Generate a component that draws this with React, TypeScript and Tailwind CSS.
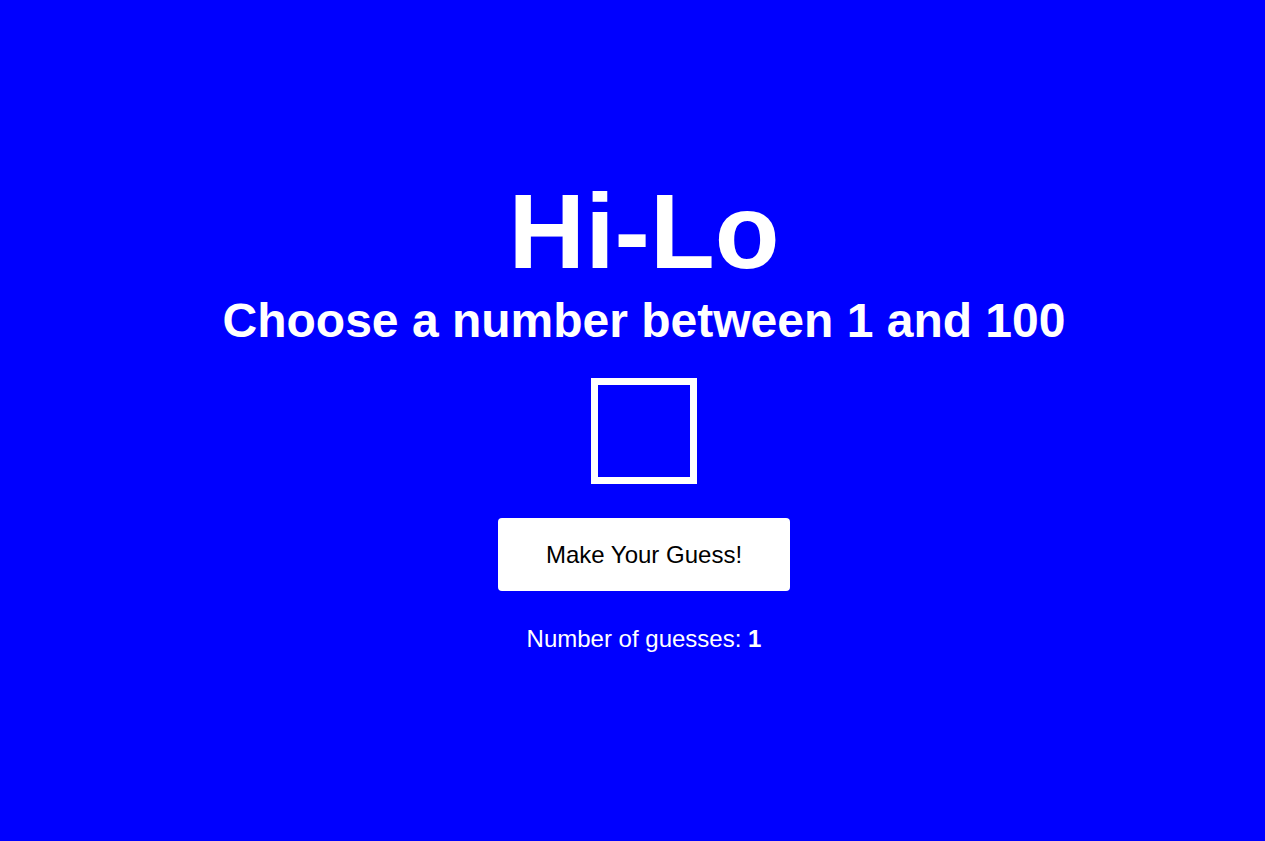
export default function App() {
  return (
    <div
      className="flex min-h-[841px] w-full flex-col items-center bg-[#0000ff] pl-[23px] text-white"
      style={{ fontFamily: '"Liberation Sans", Arial, sans-serif' }}
    >
      <h1 className="mt-[178px] text-[106px] font-bold leading-none">Hi-Lo</h1>
      <h2 className="mt-[13px] text-[48px] font-bold leading-none">Choose a number between 1 and 100</h2>
      <input
        type="text"
        aria-label="Your guess"
        className="mt-[33px] h-[106px] w-[106px] border-[7px] border-white bg-transparent text-center text-[48px] text-white outline-none"
      />
      <button className="mt-[34px] h-[73px] w-[292px] rounded-[4px] bg-white text-[24px] text-black">
        Make Your Guess!
      </button>
      <p className="mt-[36px] text-[24px] leading-none">
        Number of guesses: <span className="font-bold">1</span>
      </p>
    </div>
  );
}
